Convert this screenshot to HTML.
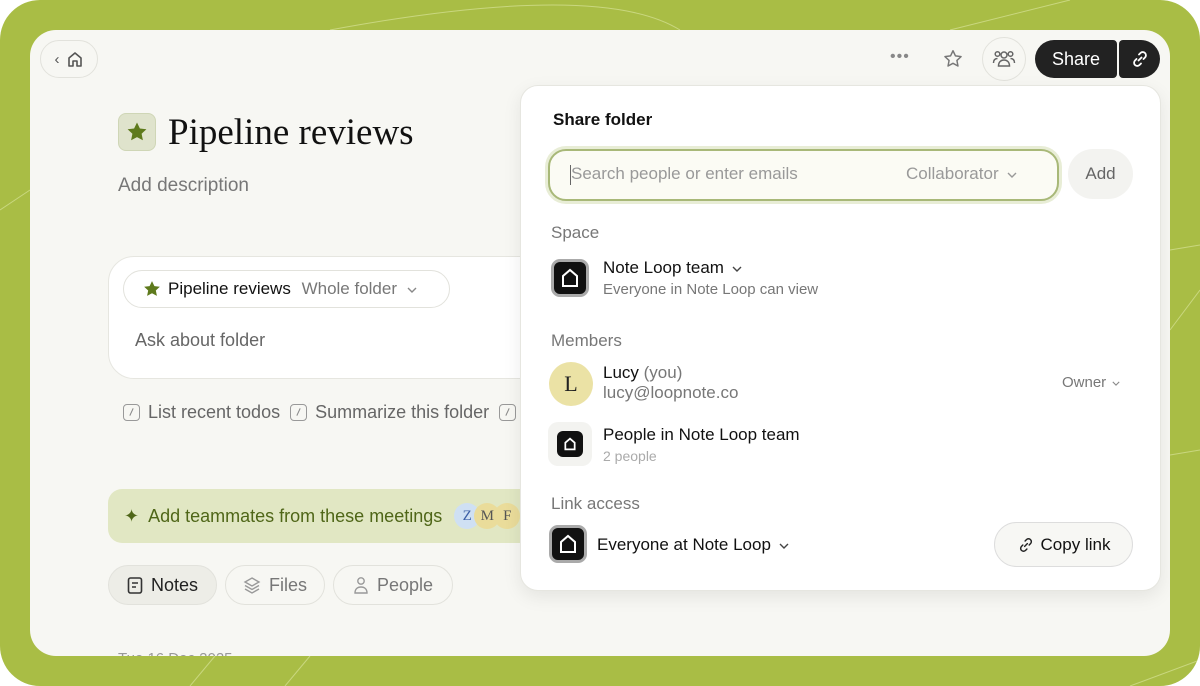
<!DOCTYPE html>
<html><head><meta charset="utf-8"><style>
*{box-sizing:border-box;margin:0;padding:0}
body{width:1200px;height:686px;background:#fff;font-family:"Liberation Sans",sans-serif;overflow:hidden;position:relative}
.outer{position:absolute;inset:0;background:#a9bd45;border-radius:40px;overflow:hidden}
.win{position:absolute;left:30px;top:30px;width:1140px;height:626px;background:#f7f7f3;border-radius:26px;overflow:hidden}
.abs{position:absolute}
.pill{position:absolute;border:1px solid #e2e2dc;border-radius:22px;display:flex;align-items:center}
.g{color:#777}
.pop{position:absolute;left:490px;top:55px;width:641px;height:506px;background:#fff;border:1px solid #e6e6e0;border-radius:18px;box-shadow:0 6px 18px rgba(0,0,0,.08)}
.ic{width:38px;height:38px;border-radius:9px;background:#111;border:3px solid #aaa;display:flex;align-items:center;justify-content:center}
.t{font-size:17px;color:#111}
.s{font-size:15px;color:#777}
.cb{display:inline-block;width:17px;height:17px;border:1.5px solid #999;border-radius:4px;vertical-align:-3px;margin-right:8px;position:relative}
.cb:after{content:"";position:absolute;left:7px;top:3px;width:1px;height:8px;background:#888;transform:rotate(25deg)}
.chev{display:inline-block;vertical-align:middle;margin-left:4px}
</style></head><body>
<div class="outer">
<svg class="abs" style="left:0;top:0" width="1200" height="686"><path d="M330 30 Q600 -20 680 30 M1070 0 L950 30 M0 210 L30 190 M1170 250 L1200 245 M1170 330 L1200 290 M1170 455 L1200 450 M190 686 L215 656 M285 686 L310 656 M1130 686 L1200 660" stroke="#c9d77f" stroke-width="1" fill="none"/></svg>
<div class="win">
 <div class="pill" style="left:10px;top:10px;width:58px;height:38px;justify-content:center;gap:6px;color:#555;font-size:15px">‹<svg width="18" height="18" viewBox="0 0 18 18"><path d="M3 16V8L9 3l6 5v8h-4v-5H7v5z" fill="none" stroke="#555" stroke-width="1.6" stroke-linejoin="round"/></svg></div>
 <div class="abs" style="left:860px;top:18px;color:#888;font-size:16px;letter-spacing:1px">•••</div>
 <svg class="abs" style="left:912px;top:18px" width="22" height="22" viewBox="0 0 24 24"><path d="M12 3l2.7 5.6 6.1.8-4.5 4.2 1.1 6L12 16.7 6.6 19.6l1.1-6L3.2 9.4l6.1-.8z" fill="none" stroke="#777" stroke-width="1.6" stroke-linejoin="round"/></svg>
 <div class="pill" style="left:952px;top:7px;width:44px;height:44px;justify-content:center;border-radius:50%"><svg width="24" height="22" viewBox="0 0 24 22"><g fill="none" stroke="#666" stroke-width="1.5"><circle cx="12" cy="7" r="3"/><circle cx="5.5" cy="6" r="2.3"/><circle cx="18.5" cy="6" r="2.3"/><path d="M6.5 18c0-4 2.5-6 5.5-6s5.5 2 5.5 6zM1.5 15c0-3 1.5-4.5 4-4.5M22.5 15c0-3-1.5-4.5-4-4.5"/></g></svg></div>
 <div class="abs" style="left:1005px;top:10px;width:82px;height:38px;background:#222;border-radius:19px 4px 4px 19px;color:#fff;font-size:18px;display:flex;align-items:center;justify-content:center">Share</div>
 <div class="abs" style="left:1089px;top:10px;width:41px;height:38px;background:#222;border-radius:4px 19px 19px 4px;display:flex;align-items:center;justify-content:center"><svg width="20" height="20" viewBox="0 0 20 20"><g fill="none" stroke="#fff" stroke-width="1.8" stroke-linecap="round"><path d="M8.5 11.5l3-3M9 5.5l1.5-1.5a3 3 0 014.5 4.5L13.5 10M11 14.5L9.5 16A3 3 0 015 11.5L6.5 10"/></g></svg></div>

 <div class="abs" style="left:88px;top:83px;width:38px;height:38px;border-radius:8px;background:#dfe3cc;border:1px solid #cfd6b6;display:flex;align-items:center;justify-content:center"><svg width="24" height="24" viewBox="0 0 24 24"><path d="M12 2.5l2.9 6 6.5.8-4.8 4.5 1.3 6.5L12 17.1l-5.9 3.2 1.3-6.5L2.6 9.3l6.5-.8z" fill="#5e7a1c"/></svg></div>
 <div class="abs" style="left:138px;top:81px;font-family:'Liberation Serif',serif;font-size:37px;color:#111;white-space:nowrap">Pipeline reviews</div>
 <div class="abs g" style="left:88px;top:145px;font-size:19px">Add description</div>

 <div class="abs" style="left:78px;top:226px;width:480px;height:123px;background:#fff;border:1px solid #e6e6e0;border-radius:26px"></div>
 <div class="pill" style="left:93px;top:240px;width:327px;height:38px;background:#fff;padding-left:18px;gap:6px;font-size:17px;white-space:nowrap"><svg width="20" height="20" viewBox="0 0 24 24"><path d="M12 2.5l2.9 6 6.5.8-4.8 4.5 1.3 6.5L12 17.1l-5.9 3.2 1.3-6.5L2.6 9.3l6.5-.8z" fill="#5e7a1c"/></svg><span style="color:#111">Pipeline reviews</span><span class="g">&nbsp;Whole folder<svg class="chev" style="margin-left:10px" width="10" height="6" viewBox="0 0 10 6"><path d="M1 1l4 4 4-4" fill="none" stroke="#888" stroke-width="1.4"/></svg></span></div>
 <div class="abs g" style="left:105px;top:300px;font-size:18px;color:#666">Ask about folder</div>
 <div class="abs g" style="left:93px;top:372px;font-size:18px;color:#666;white-space:nowrap"><span class="cb"></span>List recent todos &nbsp;<span class="cb"></span>Summarize this folder &nbsp;<span class="cb"></span></div>

 <div class="abs" style="left:78px;top:459px;width:440px;height:54px;background:#e1e7c3;border-radius:14px 0 0 14px;display:flex;align-items:center;padding-left:16px;color:#4f6618;font-size:18px;white-space:nowrap">✦&nbsp; Add teammates from these meetings
  <span style="margin-left:12px;display:inline-flex"><span style="width:26px;height:26px;border-radius:50%;background:#cfe0f3;color:#3c5fa6;font-family:'Liberation Serif',serif;display:flex;align-items:center;justify-content:center;font-size:15px">Z</span><span style="width:26px;height:26px;border-radius:50%;background:#eadc9a;color:#555;font-family:'Liberation Serif',serif;display:flex;align-items:center;justify-content:center;font-size:15px;margin-left:-6px">M</span><span style="width:26px;height:26px;border-radius:50%;background:#eadc9a;color:#555;font-family:'Liberation Serif',serif;display:flex;align-items:center;justify-content:center;font-size:15px;margin-left:-6px">F</span></span></div>

 <div class="pill" style="left:78px;top:535px;width:109px;height:40px;background:#ededE7;justify-content:center;gap:8px;font-size:18px;color:#222"><svg width="16" height="18" viewBox="0 0 16 18"><rect x="1.5" y="2" width="13" height="15" rx="2" fill="none" stroke="#333" stroke-width="1.6"/><path d="M5 7h6M5 11h4" stroke="#333" stroke-width="1.6"/></svg>Notes</div>
 <div class="pill" style="left:195px;top:535px;width:100px;height:40px;justify-content:center;gap:8px;font-size:18px;color:#777"><svg width="18" height="18" viewBox="0 0 18 18"><path d="M9 2l7 4-7 4-7-4zM2 9.5l7 4 7-4M2 13l7 4 7-4" fill="none" stroke="#999" stroke-width="1.4"/></svg>Files</div>
 <div class="pill" style="left:303px;top:535px;width:120px;height:40px;justify-content:center;gap:8px;font-size:18px;color:#777"><svg width="16" height="18" viewBox="0 0 16 18"><circle cx="8" cy="5" r="3.2" fill="none" stroke="#999" stroke-width="1.4"/><path d="M2 17c0-4 2.5-6 6-6s6 2 6 6z" fill="none" stroke="#999" stroke-width="1.4"/></svg>People</div>
 <div class="abs" style="left:88px;top:620px;font-size:15px;color:#999">Tue 16 Dec 2025</div>

 <div class="pop">
  <div class="abs" style="left:32px;top:24px;font-size:17px;font-weight:bold;color:#111">Share folder</div>
  <div class="abs" style="left:27px;top:63px;width:511px;height:52px;border:2px solid #a8b878;border-radius:18px;background:#fbfbf4;box-shadow:0 0 0 3px #e8edd6"><span class="abs" style="left:20px;top:14px;width:1px;height:20px;background:#666"></span><span class="abs" style="left:21px;top:13px;font-size:17px;color:#999">Search people or enter emails</span><span class="abs" style="left:356px;top:13px;font-size:17px;color:#999;white-space:nowrap">Collaborator<svg class="chev" style="margin-left:8px" width="10" height="6" viewBox="0 0 10 6"><path d="M1 1l4 4 4-4" fill="none" stroke="#999" stroke-width="1.4"/></svg></span></div>
  <div class="abs" style="left:547px;top:63px;width:65px;height:50px;border-radius:25px;background:#f3f3f0;display:flex;align-items:center;justify-content:center;font-size:17px;color:#666">Add</div>
  <div class="abs s" style="left:30px;top:137px;font-size:17px">Space</div>
  <div class="abs ic" style="left:30px;top:173px"><svg width="18" height="20" viewBox="0 0 18 20"><path d="M2 18V8l7-6 7 6v10z" fill="none" stroke="#fff" stroke-width="2"/></svg></div>
  <div class="abs t" style="left:82px;top:172px">Note Loop team<svg class="chev" style="margin-left:8px" width="10" height="6" viewBox="0 0 10 6"><path d="M1 1l4 4 4-4" fill="none" stroke="#444" stroke-width="1.4"/></svg></div>
  <div class="abs s" style="left:82px;top:195px">Everyone in Note Loop can view</div>
  <div class="abs s" style="left:30px;top:245px;font-size:17px">Members</div>
  <div class="abs" style="left:28px;top:276px;width:44px;height:44px;border-radius:50%;background:#ebe2a5;display:flex;align-items:center;justify-content:center;font-family:'Liberation Serif',serif;font-size:22px;color:#222">L</div>
  <div class="abs t" style="left:82px;top:277px">Lucy <span class="g">(you)</span></div>
  <div class="abs" style="left:82px;top:297px;font-size:17px;color:#777">lucy@loopnote.co</div>
  <div class="abs s" style="left:541px;top:288px">Owner<svg class="chev" style="margin-left:6px" width="8" height="5" viewBox="0 0 10 6"><path d="M1 1l4 4 4-4" fill="none" stroke="#888" stroke-width="1.4"/></svg></div>
  <div class="abs" style="left:27px;top:336px;width:44px;height:44px;border-radius:10px;background:#f3f3f0;display:flex;align-items:center;justify-content:center"><div class="ic" style="width:26px;height:26px;border:none;border-radius:6px"><svg width="12" height="14" viewBox="0 0 18 20"><path d="M2 18V8l7-6 7 6v10z" fill="none" stroke="#fff" stroke-width="2.6"/></svg></div></div>
  <div class="abs t" style="left:82px;top:339px">People in Note Loop team</div>
  <div class="abs" style="left:82px;top:362px;font-size:14px;color:#aaa">2 people</div>
  <div class="abs s" style="left:30px;top:408px;font-size:17px">Link access</div>
  <div class="abs ic" style="left:28px;top:439px"><svg width="18" height="20" viewBox="0 0 18 20"><path d="M2 18V8l7-6 7 6v10z" fill="none" stroke="#fff" stroke-width="2"/></svg></div>
  <div class="abs t" style="left:76px;top:449px">Everyone at Note Loop<svg class="chev" style="margin-left:8px" width="10" height="6" viewBox="0 0 10 6"><path d="M1 1l4 4 4-4" fill="none" stroke="#444" stroke-width="1.4"/></svg></div>
  <div class="abs" style="left:473px;top:436px;width:139px;height:45px;border:1px solid #ddd;border-radius:23px;background:#f7f7f4;display:flex;align-items:center;justify-content:center;gap:6px;font-size:17px;color:#111"><svg width="18" height="18" viewBox="0 0 20 20"><g fill="none" stroke="#222" stroke-width="1.6" stroke-linecap="round"><path d="M8.5 11.5l3-3M9 5.5l1.5-1.5a3 3 0 014.5 4.5L13.5 10M11 14.5L9.5 16A3 3 0 015 11.5L6.5 10"/></g></svg>Copy link</div>
 </div>
</div>
</div>
</body></html>
